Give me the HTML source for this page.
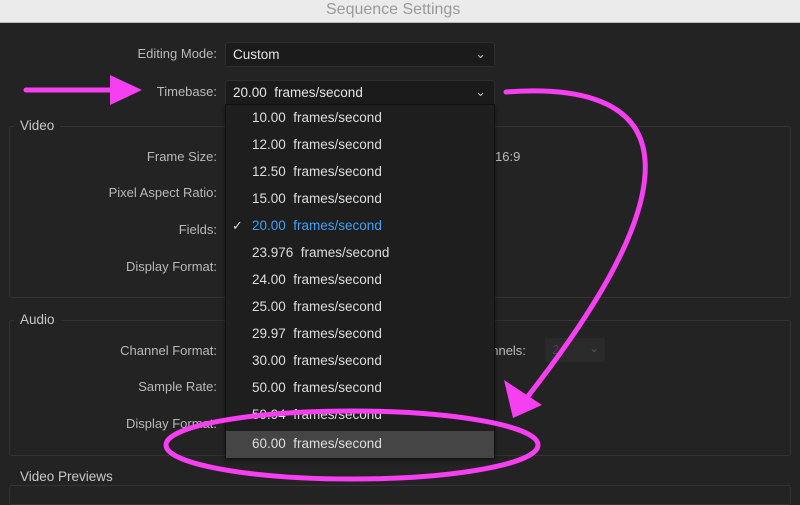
<!DOCTYPE html>
<html><head><style>
*{margin:0;padding:0;box-sizing:border-box}
body{width:800px;height:493px;overflow:hidden;background:#232323;font-family:"Liberation Sans",sans-serif;position:relative;color:#c9c9c9;font-size:13px}
.t{position:absolute;white-space:nowrap}
.lab{position:absolute;right:583px;white-space:nowrap;color:#b9b9b9;font-size:13px}
.box{position:absolute;border:1px solid #333;border-radius:3px}
.sel{position:absolute;background:#1b1b1b;border:1px solid #2e2e2e;border-radius:3px;color:#e6e6e6;font-size:13.5px;padding-left:7px;line-height:23px}
.chev{position:absolute;right:8px;top:-1px;color:#bbb;font-size:13px}
.menu{position:absolute;left:225px;top:104px;width:270px;height:354px;background:#1e1e1e;border:1px solid #111;box-shadow:0 2px 4px rgba(0,0,0,.5)}
.it{position:absolute;left:26px;color:#dedede;font-size:13.5px;white-space:nowrap}
.gl{position:absolute;background:#232323;padding:0 6px;color:#c9c9c9;font-size:13.5px}
</style></head><body>
<div style="position:absolute;left:0;top:0;width:800px;height:23px;background:#ebebeb;border-bottom:1px solid #bbb"></div>
<div class="t" style="left:326px;top:1px;color:#9a9a9a;font-size:16px">Sequence Settings</div>

<div class="box" style="left:9px;top:126px;width:782px;height:172px"></div>
<div class="gl" style="left:14px;top:118px">Video</div>
<div class="box" style="left:9px;top:320px;width:782px;height:136px"></div>
<div class="gl" style="left:14px;top:312px">Audio</div>
<div class="box" style="left:9px;top:485px;width:782px;height:20px"></div>
<div class="gl" style="left:14px;top:469px">Video Previews</div>

<div class="lab" style="top:46px">Editing Mode:</div>
<div class="lab" style="top:84px">Timebase:</div>
<div class="lab" style="top:149px">Frame Size:</div>
<div class="lab" style="top:185px">Pixel Aspect Ratio:</div>
<div class="lab" style="top:222px">Fields:</div>
<div class="lab" style="top:259px">Display Format:</div>
<div class="lab" style="top:343px">Channel Format:</div>
<div class="lab" style="top:379px">Sample Rate:</div>
<div class="lab" style="top:416px">Display Format:</div>
<div class="t" style="left:495px;top:149px;color:#b9b9b9">16:9</div>
<div class="t" style="left:484px;top:343px;color:#b9b9b9">annels:</div>
<div style="position:absolute;left:545px;top:338px;width:60px;height:24px;background:#2a2a2a;border-radius:2px"><span class="t" style="left:7px;top:4px;color:#444">2</span><span class="t" style="left:44px;top:3px;color:#555;font-size:12px">&#8964;</span></div>

<div class="sel" style="left:225px;top:42px;width:270px;height:25px">Custom<span class="chev">&#8964;</span></div>
<div class="sel" style="left:225px;top:80px;width:270px;height:25px">20.00&nbsp; frames/second<span class="chev">&#8964;</span></div>

<div class="menu">
<div class="it" style="top:5px">10.00&nbsp; frames/second</div>
<div class="it" style="top:32px">12.00&nbsp; frames/second</div>
<div class="it" style="top:59px">12.50&nbsp; frames/second</div>
<div class="it" style="top:86px">15.00&nbsp; frames/second</div>
<div class="t" style="left:6px;top:113px;color:#ddd;font-size:13px">&#10003;</div>
<div class="it" style="top:113px;color:#3fa1f5">20.00&nbsp; frames/second</div>
<div class="it" style="top:140px">23.976&nbsp; frames/second</div>
<div class="it" style="top:167px">24.00&nbsp; frames/second</div>
<div class="it" style="top:194px">25.00&nbsp; frames/second</div>
<div class="it" style="top:221px">29.97&nbsp; frames/second</div>
<div class="it" style="top:248px">30.00&nbsp; frames/second</div>
<div class="it" style="top:275px">50.00&nbsp; frames/second</div>
<div class="it" style="top:302px">59.94&nbsp; frames/second</div>
<div style="position:absolute;left:0;top:326px;width:268px;height:27px;background:#454545"></div>
<div class="it" style="top:331px">60.00&nbsp; frames/second</div>
</div>

<svg width="800" height="493" style="position:absolute;left:0;top:0">
<g fill="none" stroke="#f53ff0" stroke-linecap="round">
<line x1="26" y1="90" x2="115" y2="90" stroke-width="5"/>
<path d="M506 92 C560 88 640 92 645 160 C650 230 580 330 525 400" stroke-width="5"/>
<ellipse cx="352" cy="445" rx="186" ry="34" stroke-width="5"/>
</g>
<polygon points="110,75 142,90 110,105" fill="#f53ff0"/>
<polygon points="504,380 542,405 513,418" fill="#f53ff0"/>
</svg>
</body></html>
